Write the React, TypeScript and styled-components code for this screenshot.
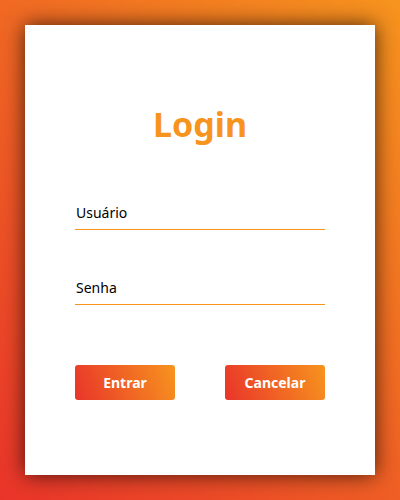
import React from "react";
import styled, { createGlobalStyle } from "styled-components";

const GlobalStyle = createGlobalStyle`
  * { box-sizing: border-box; }
  body { margin: 0; font-family: "Noto Sans", "Open Sans", sans-serif; }
`;

const Page = styled.main`
  min-height: 100vh;
  padding: 25px;
  display: flex;
  background: linear-gradient(45deg, #e9342a, #f7941e);
`;

const Card = styled.form`
  flex: 1;
  display: flex;
  flex-direction: column;
  padding: 75px 50px;
  background: #fff;
  box-shadow: 0 0 20px rgba(0, 0, 0, 0.7);
`;

const Title = styled.h1`
  margin: 0 0 47px;
  font-size: 34px;
  line-height: 48px;
  font-weight: 700;
  text-align: center;
  color: #f7941e;
`;

const Field = styled.input`
  width: 100%;
  height: 35px;
  margin-bottom: 40px;
  padding: 0 1px;
  border: 0;
  border-bottom: 1px solid #f7941e;
  border-radius: 0;
  outline: 0;
  background: transparent;
  font: inherit;
  font-size: 14px;
  color: #000;
  &::placeholder { color: #000; opacity: 1; }
`;

const Actions = styled.div`
  display: flex;
  gap: 50px;
  margin-top: 20px;
`;

const Button = styled.button`
  flex: 1;
  min-width: 0;
  height: 35px;
  padding: 0;
  border: 0;
  border-radius: 3px;
  background: linear-gradient(70deg, #e9342a, #f7941e);
  color: #fff;
  font: inherit;
  font-size: 14px;
  font-weight: 700;
  cursor: pointer;
`;

export default function App() {
  return (
    <>
      <GlobalStyle />
      <Page>
        <Card onSubmit={(e: React.FormEvent) => e.preventDefault()}>
          <Title>Login</Title>
          <Field type="text" placeholder="Usuário" aria-label="Usuário" />
          <Field type="password" placeholder="Senha" aria-label="Senha" />
          <Actions>
            <Button type="submit">Entrar</Button>
            <Button type="reset">Cancelar</Button>
          </Actions>
        </Card>
      </Page>
    </>
  );
}
